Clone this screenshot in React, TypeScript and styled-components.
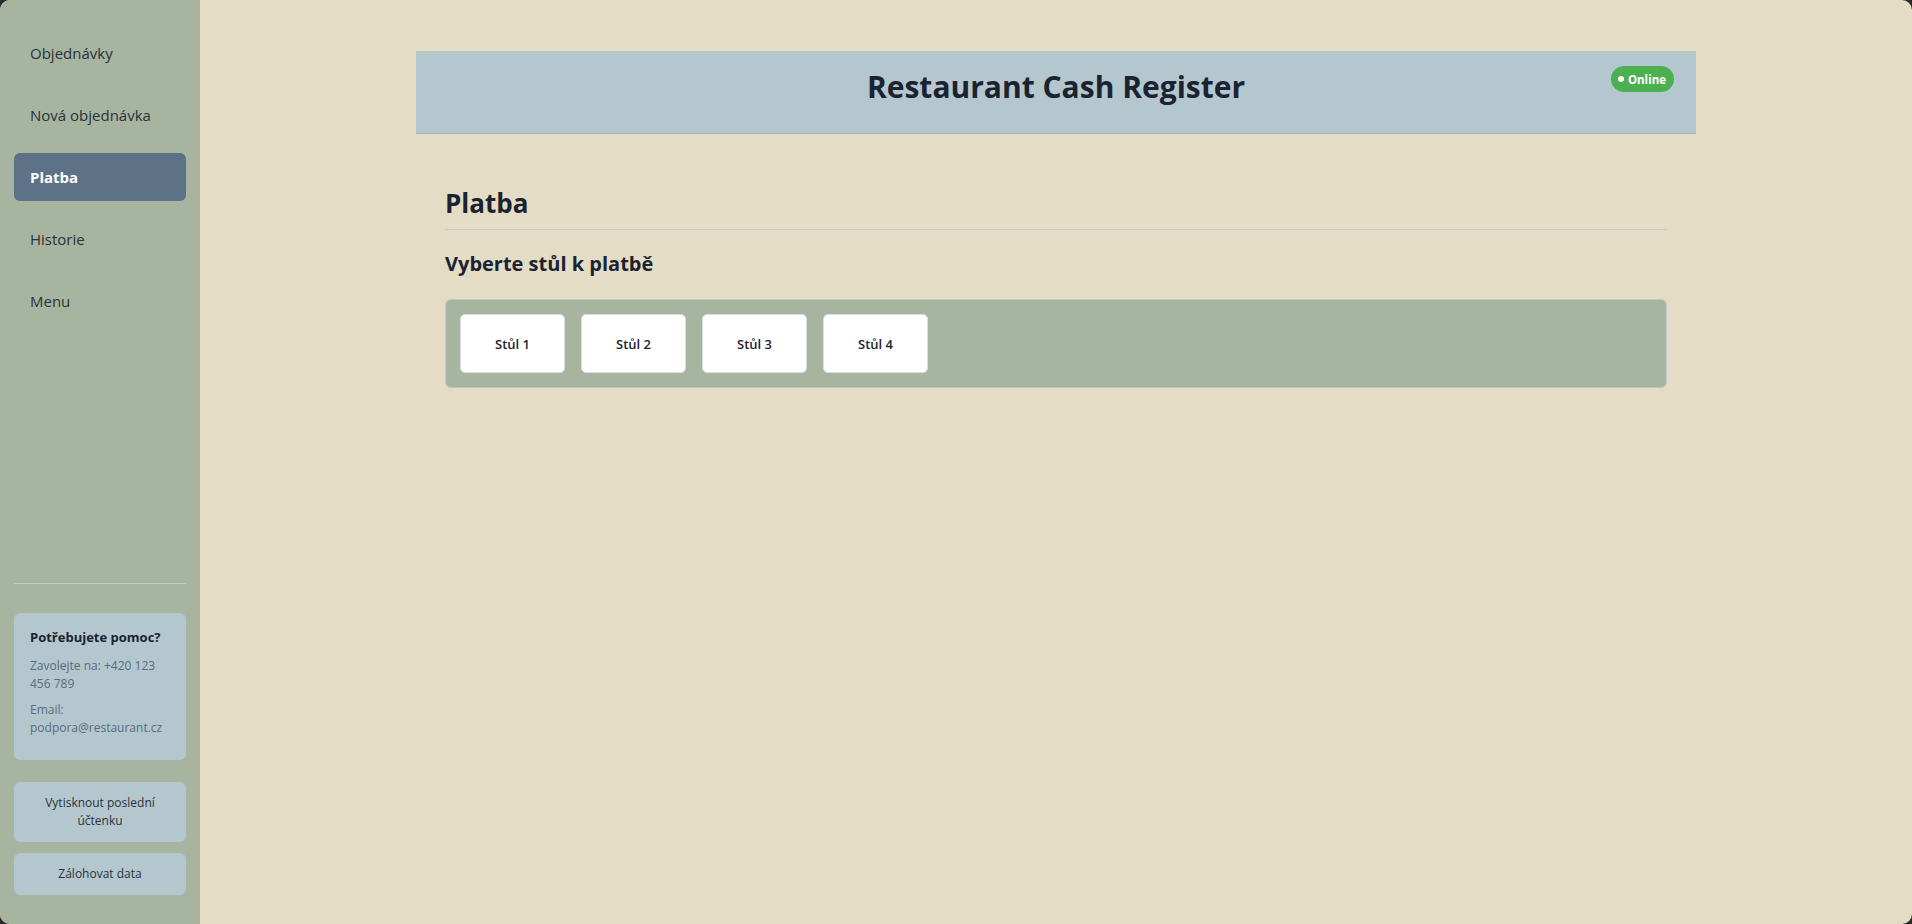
import React from "react";
import styled, { createGlobalStyle } from "styled-components";

const GlobalStyle = createGlobalStyle`
  html, body {
    margin: 0;
    padding: 0;
    background: #2a2a2a;
  }
  body {
    font-family: "Open Sans", "Noto Sans", "Liberation Sans", sans-serif;
    color: #1e2633;
  }
  * { box-sizing: border-box; }
`;

const Shell = styled.div`
  display: flex;
  height: 100vh;
  border-radius: 10px;
  overflow: hidden;
  background: #e4dcc4;
`;

const Sidebar = styled.aside`
  width: 200px;
  flex-shrink: 0;
  background: #a7b5a0;
  display: flex;
  flex-direction: column;
  padding: 29px 14px 29px;
`;

const Nav = styled.nav`
  display: flex;
  flex-direction: column;
  gap: 14px;
`;

const NavItem = styled.div<{ $active?: boolean }>`
  height: 48px;
  display: flex;
  align-items: center;
  padding: 0 16px;
  border-radius: 6px;
  font-size: 15px;
  cursor: pointer;
  color: ${(p) => (p.$active ? "#ffffff" : "#2a3138")};
  font-weight: ${(p) => (p.$active ? 700 : 400)};
  background: ${(p) => (p.$active ? "#5d7286" : "transparent")};
`;

const Spacer = styled.div`
  flex: 1;
`;

const Divider = styled.hr`
  border: none;
  border-top: 1px solid #bccdd3;
  margin: 0 0 29px;
`;

const HelpBox = styled.div`
  background: #b4c7cf;
  border-radius: 6px;
  padding: 14px 16px 15px;
`;

const HelpTitle = styled.div`
  font-size: 13px;
  font-weight: 700;
  color: #1b2230;
  line-height: 20px;
  margin-bottom: 10px;
`;

const HelpText = styled.p`
  margin: 0 0 8px;
  font-size: 12px;
  line-height: 18px;
  color: #5a6b7a;
`;

const SideButtons = styled.div`
  display: flex;
  flex-direction: column;
  gap: 11px;
  margin-top: 22px;
`;

const SideButton = styled.button`
  background: #b4c7cf;
  border: none;
  border-radius: 6px;
  padding: 12px 16px;
  font-family: inherit;
  font-size: 12px;
  line-height: 18px;
  color: #2a3138;
  text-align: center;
  cursor: pointer;
`;

const Main = styled.main`
  flex: 1;
  padding-top: 51px;
  overflow: auto;
`;

const Container = styled.div`
  max-width: 1280px;
  margin: 0 auto;
`;

const Header = styled.header`
  position: relative;
  background: #b4c7cf;
  border-bottom: 1px solid #9fb5c1;
  padding: 17px 20px 27px;
  text-align: center;
`;

const Title = styled.h1`
  margin: 0;
  font-size: 30px;
  line-height: 38px;
  font-weight: 700;
  color: #1b2330;
`;

const Badge = styled.span`
  position: absolute;
  top: 15px;
  right: 22px;
  height: 26px;
  padding: 0 8px 0 7px;
  border-radius: 13px;
  background: #4caf50;
  color: #ffffff;
  font-size: 11.5px;
  font-weight: 700;
  display: flex;
  align-items: center;
  gap: 4px;
`;

const Dot = styled.span`
  width: 6px;
  height: 6px;
  border-radius: 50%;
  background: #ffffff;
`;

const Content = styled.section`
  padding: 0 29px;
`;

const PageTitle = styled.h2`
  margin: 52px 0 0;
  padding-bottom: 9px;
  border-bottom: 1px solid #bfcbcf;
  font-size: 26px;
  line-height: 34px;
  font-weight: 700;
  color: #1b2330;
`;

const SubTitle = styled.h3`
  margin: 20px 0 21px;
  font-size: 20px;
  line-height: 28px;
  font-weight: 700;
  color: #1b2330;
`;

const TablePanel = styled.div`
  background: #a7b5a0;
  border: 1px solid #b9c9ce;
  border-radius: 6px;
  padding: 14px 14px;
  display: flex;
  gap: 16px;
`;

const TableButton = styled.button`
  width: 105px;
  height: 59px;
  background: #ffffff;
  border: 1px solid #d9dfe2;
  border-radius: 5px;
  font-family: inherit;
  font-size: 13px;
  font-weight: 600;
  color: #1b2330;
  cursor: pointer;
`;

const navItems = ["Objednávky", "Nová objednávka", "Platba", "Historie", "Menu"];
const tables = ["Stůl 1", "Stůl 2", "Stůl 3", "Stůl 4"];

export default function App() {
  return (
    <>
      <GlobalStyle />
      <Shell>
        <Sidebar>
          <Nav>
            {navItems.map((n) => (
              <NavItem key={n} $active={n === "Platba"}>
                {n}
              </NavItem>
            ))}
          </Nav>
          <Spacer />
          <Divider />
          <HelpBox>
            <HelpTitle>Potřebujete pomoc?</HelpTitle>
            <HelpText>Zavolejte na: +420 123 456 789</HelpText>
            <HelpText>
              Email:
              <br />
              podpora@restaurant.cz
            </HelpText>
          </HelpBox>
          <SideButtons>
            <SideButton>Vytisknout poslední účtenku</SideButton>
            <SideButton>Zálohovat data</SideButton>
          </SideButtons>
        </Sidebar>
        <Main>
          <Container>
            <Header>
              <Title>Restaurant Cash Register</Title>
              <Badge>
                <Dot />
                Online
              </Badge>
            </Header>
            <Content>
              <PageTitle>Platba</PageTitle>
              <SubTitle>Vyberte stůl k platbě</SubTitle>
              <TablePanel>
                {tables.map((t) => (
                  <TableButton key={t}>{t}</TableButton>
                ))}
              </TablePanel>
            </Content>
          </Container>
        </Main>
      </Shell>
    </>
  );
}
